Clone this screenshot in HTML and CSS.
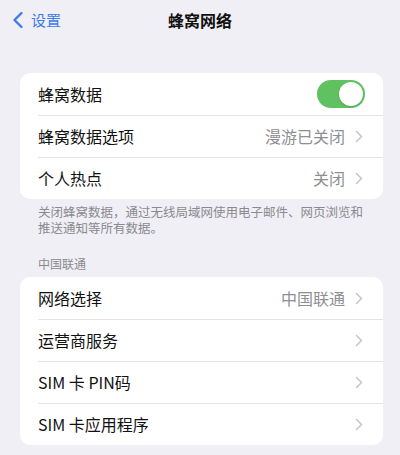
FILE: index.html
```html
<!DOCTYPE html>
<html lang="zh">
<head>
<meta charset="utf-8">
<link rel="stylesheet" href="styles.css">
</head>
<body>
<div class="nav">
  <div class="back">
    <svg class="back-icon" width="12" height="18" viewBox="0 0 12 18"><path d="M9.5 2 L2.5 9 L9.5 16" fill="none" stroke="#3d7bea" stroke-width="2.4" stroke-linecap="round" stroke-linejoin="round"/></svg>
    <span>设置</span>
  </div>
  <div class="title">蜂窝网络</div>
</div>

<div class="card first">
  <div class="row">
    <span class="label">蜂窝数据</span>
    <span class="toggle"><span class="knob"></span></span>
  </div>
  <div class="row">
    <span class="label">蜂窝数据选项</span>
    <span class="value">漫游已关闭</span>
    <svg class="chev" width="8" height="13" viewBox="0 0 8 13"><path d="M1.5 1.5 L6.5 6.5 L1.5 11.5" fill="none" stroke="#c7c7cb" stroke-width="1.6" stroke-linecap="round" stroke-linejoin="round"/></svg>
  </div>
  <div class="row">
    <span class="label">个人热点</span>
    <span class="value">关闭</span>
    <svg class="chev" width="8" height="13" viewBox="0 0 8 13"><path d="M1.5 1.5 L6.5 6.5 L1.5 11.5" fill="none" stroke="#c7c7cb" stroke-width="1.6" stroke-linecap="round" stroke-linejoin="round"/></svg>
  </div>
</div>
<div class="footer">关闭蜂窝数据，通过无线局域网使用电子邮件、网页浏览和推送通知等所有数据。</div>

<div class="section">中国联通</div>
<div class="card">
  <div class="row">
    <span class="label">网络选择</span>
    <span class="value">中国联通</span>
    <svg class="chev" width="8" height="13" viewBox="0 0 8 13"><path d="M1.5 1.5 L6.5 6.5 L1.5 11.5" fill="none" stroke="#c7c7cb" stroke-width="1.6" stroke-linecap="round" stroke-linejoin="round"/></svg>
  </div>
  <div class="row">
    <span class="label">运营商服务</span>
    <svg class="chev" width="8" height="13" viewBox="0 0 8 13"><path d="M1.5 1.5 L6.5 6.5 L1.5 11.5" fill="none" stroke="#c7c7cb" stroke-width="1.6" stroke-linecap="round" stroke-linejoin="round"/></svg>
  </div>
  <div class="row">
    <span class="label">SIM 卡 PIN码</span>
    <svg class="chev" width="8" height="13" viewBox="0 0 8 13"><path d="M1.5 1.5 L6.5 6.5 L1.5 11.5" fill="none" stroke="#c7c7cb" stroke-width="1.6" stroke-linecap="round" stroke-linejoin="round"/></svg>
  </div>
  <div class="row">
    <span class="label">SIM 卡应用程序</span>
    <svg class="chev" width="8" height="13" viewBox="0 0 8 13"><path d="M1.5 1.5 L6.5 6.5 L1.5 11.5" fill="none" stroke="#c7c7cb" stroke-width="1.6" stroke-linecap="round" stroke-linejoin="round"/></svg>
  </div>
</div>
</body>
</html>
```

FILE: styles.css
```css
html, body {
  margin: 0;
  padding: 0;
}
body {
  width: 400px;
  height: 455px;
  overflow: hidden;
  background: #f0eff5;
  font-family: "Noto Sans CJK SC", "Noto Sans", sans-serif;
  color: #111;
}
.nav {
  height: 40px;
  position: relative;
  display: flex;
  align-items: center;
  justify-content: center;
}
.back {
  position: absolute;
  left: 12px;
  top: 11px;
  display: flex;
  align-items: center;
  gap: 7px;
  color: #3d7bea;
  font-size: 15px;
  line-height: 18px;
}
.title {
  font-size: 16px;
  font-weight: 700;
  color: #111;
}
.card {
  background: #fff;
  margin: 0 17px 0 20px;
  border-radius: 10px;
  overflow: hidden;
}
.card.first {
  margin-top: 33px;
}
.row {
  height: 42px;
  display: flex;
  align-items: center;
  padding: 0 20px 0 18px;
  position: relative;
  font-size: 16px;
}
.row + .row::before {
  content: "";
  position: absolute;
  top: 0;
  left: 18px;
  right: 0;
  height: 1px;
  background: #e4e4e8;
}
.label {
  flex: 1;
  color: #111;
}
.value {
  color: #8e8e93;
  margin-right: 10px;
}
.chev {
  flex: none;
}
.toggle {
  width: 48px;
  height: 28px;
  border-radius: 14px;
  background: #5fc15f;
  position: relative;
  margin-right: -2px;
}
.knob {
  position: absolute;
  right: 2px;
  top: 2px;
  width: 24px;
  height: 24px;
  border-radius: 50%;
  background: #fff;
  box-shadow: 0 1px 2px rgba(0,0,0,0.15);
}
.footer {
  padding: 5px 28px 0 38px;
  font-size: 12.5px;
  line-height: 16px;
  color: #8a8a8e;
}
.section {
  margin-top: 20px;
  padding: 0 0 5px 38px;
  font-size: 12px;
  line-height: 16px;
  color: #8a8a8e;
}
```
